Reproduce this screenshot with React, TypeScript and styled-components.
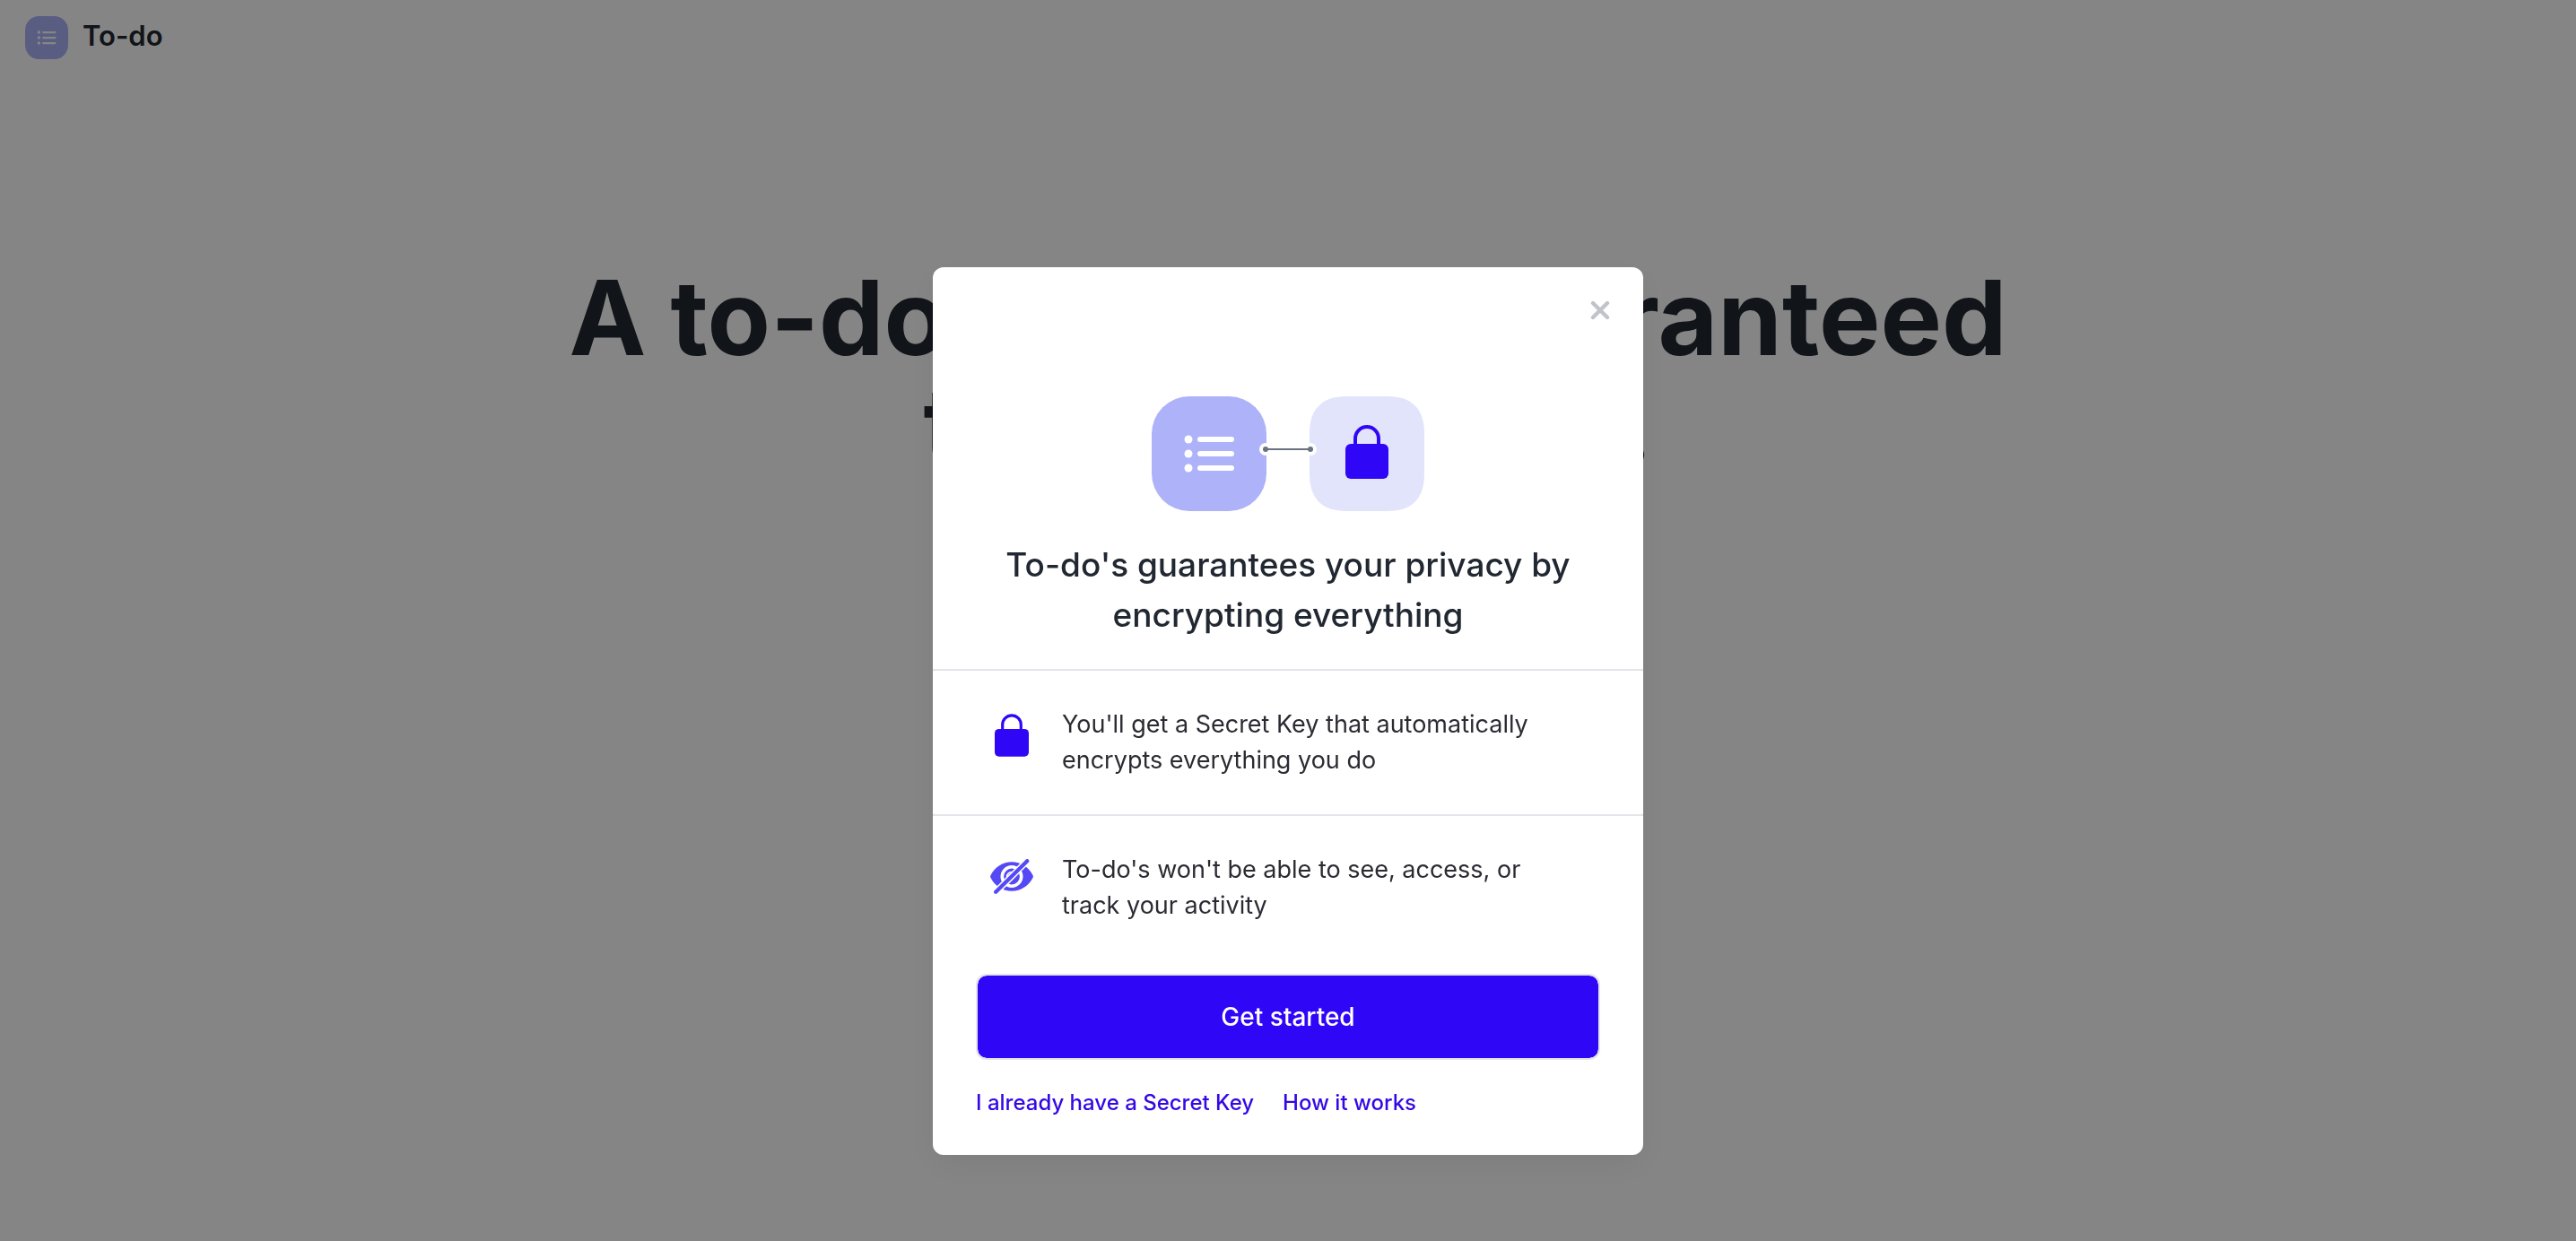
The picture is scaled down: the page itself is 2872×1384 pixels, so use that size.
import React from 'react';
import styled, { createGlobalStyle } from 'styled-components';

const color = {
  ink: '#222831',
  body: '#2b2b33',
  brand: '#3006f7',
  brandText: '#3408e6',
  lilac: '#adb2f9',
  pale: '#e2e4fc',
  line: '#e4e4ea',
  eye: '#5549f5',
};

const GlobalStyle = createGlobalStyle`
  *, *::before, *::after { box-sizing: border-box; }
  body {
    margin: 0;
    background: #fff;
    color: ${color.ink};
    font-family: Inter, "Liberation Sans", sans-serif;
  }
`;

const Header = styled.header`
  display: flex;
  align-items: flex-start;
  gap: 16px;
  padding: 18px 28px;
`;

const Brand = styled.span`
  font-size: 31px;
  font-weight: 600;
  line-height: 44px;
`;

const Hero = styled.main`
  padding: 211px 48px 96px;
  text-align: center;
`;

const HeroTitle = styled.h1`
  max-width: 1700px;
  margin: 0 auto;
  font-size: 115px;
  font-weight: 700;
  line-height: 120px;
`;

const Backdrop = styled.div`
  position: fixed;
  inset: 0;
  display: flex;
  justify-content: center;
  align-items: flex-start;
  padding: 298px 24px 24px;
  overflow: auto;
  background: rgba(0, 0, 0, 0.48);
`;

const Dialog = styled.section`
  position: relative;
  width: 100%;
  max-width: 792px;
  border-radius: 12px;
  background: #fff;
  box-shadow: 0 12px 36px rgba(0, 0, 0, 0.06);
`;

const CloseButton = styled.button`
  position: absolute;
  top: 24px;
  right: 24px;
  display: grid;
  place-items: center;
  width: 48px;
  height: 48px;
  padding: 0;
  border: 0;
  background: none;
  color: #c1c3cc;
  cursor: pointer;
`;

const Intro = styled.div`
  display: flex;
  flex-direction: column;
  gap: 32px;
  padding: 144px 48px 32px;
`;

const Badges = styled.div`
  display: flex;
  justify-content: center;
  align-items: flex-start;
`;

const Connector = styled.svg`
  z-index: 1;
  margin: 52px -8px 0;
`;

const Title = styled.h2`
  margin: 0;
  font-size: 37px;
  font-weight: 500;
  line-height: 56px;
  text-align: center;
`;

const Points = styled.ul`
  margin: 0;
  padding: 0;
  list-style: none;
`;

const Point = styled.li`
  display: flex;
  gap: 16px;
  padding: 40px 88px 40px 48px;
  border-top: 2px solid ${color.line};
`;

const PointIcon = styled.span`
  display: flex;
  flex: 0 0 80px;
  justify-content: center;
  align-items: flex-start;
  padding-top: 8px;
`;

const PointText = styled.p`
  margin: 0;
  color: ${color.body};
  font-size: 27px;
  line-height: 40px;
`;

const Actions = styled.div`
  display: flex;
  flex-direction: column;
  gap: 30px;
  padding: 16px 48px 40px;
`;

const PrimaryButton = styled.button`
  height: 96px;
  border: 2px solid ${color.line};
  border-radius: 12px;
  background: ${color.brand};
  background-clip: padding-box;
  color: #fff;
  font-family: inherit;
  font-size: 28px;
  font-weight: 500;
  cursor: pointer;
`;

const Links = styled.nav`
  display: flex;
  gap: 32px;
`;

const TextLink = styled.a`
  color: ${color.brandText};
  font-size: 24px;
  font-weight: 500;
  line-height: 36px;
  text-decoration: none;
`;

function ListBadge({ size }: { size: number }) {
  return (
    <svg width={size} height={size} viewBox="0 0 128 128" aria-hidden="true">
      <rect width="128" height="128" rx="42" fill={color.lilac} />
      {[48, 64, 80].map((y) => (
        <g key={y} fill="#fff">
          <circle cx="41" cy={y} r="4.5" />
          <rect x="51" y={y - 3} width="41" height="6" rx="3" />
        </g>
      ))}
    </svg>
  );
}

function LockShape() {
  return (
    <>
      <path d="M11 24V15a13 13 0 0 1 26 0v9" fill="none" stroke={color.brand} strokeWidth="4" />
      <rect y="21" width="48" height="39" rx="6" fill={color.brand} />
    </>
  );
}

function LockBadge() {
  return (
    <svg width="128" height="128" viewBox="0 0 128 128" aria-hidden="true">
      <path
        d="M0 41C0 14 14 0 41 0H87C114 0 128 14 128 41V87C128 114 114 128 87 128H41C14 128 0 114 0 87Z"
        fill={color.pale}
      />
      <g transform="translate(40 32)">
        <LockShape />
      </g>
    </svg>
  );
}

function LockIcon() {
  return (
    <svg width="38" height="48" viewBox="0 0 48 60" aria-hidden="true">
      <LockShape />
    </svg>
  );
}

function HiddenEyeIcon() {
  return (
    <svg width="48" height="40" viewBox="0 0 48 40" fill="none" aria-hidden="true">
      <path
        d="M0.4 18.2C5.5 8.6 14 3.2 24 3.2S42.5 8.6 47.6 18.2Q48.2 19.5 47.6 20.8C42.5 30.4 34 35.8 24 35.8S5.5 30.4 0.4 20.8Q-0.2 19.5 0.4 18.2Z"
        fill={color.eye}
      />
      <circle cx="24" cy="19.5" r="10.7" stroke="#fff" strokeWidth="3.6" />
      <path d="M18.6 20a5.5 5.5 0 0 1 5.5-5.5" stroke="#fff" strokeWidth="1.6" />
      <path d="M41.2 2.2L6.2 36.8" stroke="#fff" strokeWidth="7.4" />
      <path d="M41.2 2.2L6.2 36.8" stroke={color.eye} strokeWidth="4.3" strokeLinecap="round" />
    </svg>
  );
}

export default function App() {
  return (
    <>
      <GlobalStyle />
      <Header>
        <ListBadge size={48} />
        <Brand>To-do</Brand>
      </Header>
      <Hero>
        <HeroTitle>
          A to-do app with guaranteed
          <br />
          to never track.
        </HeroTitle>
      </Hero>

      <Backdrop>
        <Dialog role="dialog" aria-modal="true" aria-labelledby="privacy-title">
          <CloseButton type="button" aria-label="Close">
            <svg width="24" height="24" viewBox="0 0 24 24" aria-hidden="true">
              <path d="M4 4L20 20M20 4L4 20" stroke="currentColor" strokeWidth="4.4" strokeLinecap="round" />
            </svg>
          </CloseButton>

          <Intro>
            <Badges>
              <ListBadge size={128} />
              <Connector width="64" height="14" viewBox="0 0 64 14" aria-hidden="true">
                <circle cx="7" cy="7" r="7" fill="#fff" />
                <circle cx="57" cy="7" r="7" fill="#fff" />
                <path d="M7 7H57" stroke="#6b7280" strokeWidth="2" />
                <circle cx="7" cy="7" r="3" fill="#6b7280" />
                <circle cx="57" cy="7" r="3" fill="#6b7280" />
              </Connector>
              <LockBadge />
            </Badges>
            <Title id="privacy-title">To-do's guarantees your privacy by encrypting everything</Title>
          </Intro>

          <Points>
            <Point>
              <PointIcon>
                <LockIcon />
              </PointIcon>
              <PointText>You'll get a Secret Key that automatically encrypts everything you do</PointText>
            </Point>
            <Point>
              <PointIcon>
                <HiddenEyeIcon />
              </PointIcon>
              <PointText>To-do's won't be able to see, access, or track your activity</PointText>
            </Point>
          </Points>

          <Actions>
            <PrimaryButton type="button">Get started</PrimaryButton>
            <Links>
              <TextLink href="#secret-key">I already have a Secret Key</TextLink>
              <TextLink href="#how-it-works">How it works</TextLink>
            </Links>
          </Actions>
        </Dialog>
      </Backdrop>
    </>
  );
}
